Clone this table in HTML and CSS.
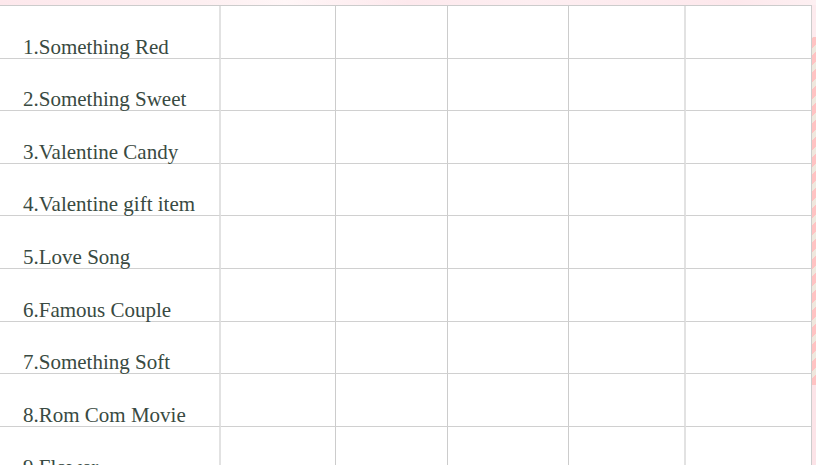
FILE: index.html
```html
<!DOCTYPE html>
<html>
<head>
<meta charset="utf-8">
<link rel="stylesheet" href="styles.css">
</head>
<body>
<div class="page">
  <div class="topstrip"></div>
  <div class="main">
    <div class="sheet">
      <div class="cell label"><span>1.Something Red</span></div><div class="cell"></div><div class="cell"></div><div class="cell"></div><div class="cell c4"></div><div class="cell"></div>
      <div class="cell label"><span>2.Something Sweet</span></div><div class="cell"></div><div class="cell"></div><div class="cell"></div><div class="cell c4"></div><div class="cell"></div>
      <div class="cell label"><span>3.Valentine Candy</span></div><div class="cell"></div><div class="cell"></div><div class="cell"></div><div class="cell c4"></div><div class="cell"></div>
      <div class="cell label"><span>4.Valentine gift item</span></div><div class="cell"></div><div class="cell"></div><div class="cell"></div><div class="cell c4"></div><div class="cell"></div>
      <div class="cell label"><span>5.Love Song</span></div><div class="cell"></div><div class="cell"></div><div class="cell"></div><div class="cell c4"></div><div class="cell"></div>
      <div class="cell label"><span>6.Famous Couple</span></div><div class="cell"></div><div class="cell"></div><div class="cell"></div><div class="cell c4"></div><div class="cell"></div>
      <div class="cell label"><span>7.Something Soft</span></div><div class="cell"></div><div class="cell"></div><div class="cell"></div><div class="cell c4"></div><div class="cell"></div>
      <div class="cell label"><span>8.Rom Com Movie</span></div><div class="cell"></div><div class="cell"></div><div class="cell"></div><div class="cell c4"></div><div class="cell"></div>
      <div class="cell label"><span>9.Flower</span></div><div class="cell"></div><div class="cell"></div><div class="cell"></div><div class="cell c4"></div><div class="cell"></div>
    </div>
    <div class="stripe"></div>
  </div>
</div>
</body>
</html>
```
FILE: styles.css
```css
html, body {
  margin: 0;
  padding: 0;
  background: #ffffff;
}
.page {
  width: 816px;
  height: 465px;
  overflow: hidden;
  display: flex;
  flex-direction: column;
}
.topstrip {
  height: 5px;
  flex: none;
  background: linear-gradient(90deg, #fde8ec 0%, #fdeff1 25%, #fff6f7 35%, #fde9ed 50%, #fdeef1 65%, #fde8ec 90%, #fdf0f2 100%);
}
.main {
  display: flex;
  flex: 1;
}
.sheet {
  display: grid;
  grid-template-columns: 221px 115px 112px 121px 117px 126px;
  grid-auto-rows: 52.6px;
  border-top: 1px solid #cccccc;
  width: 812px;
  flex: none;
}
.cell {
  box-sizing: border-box;
  border-bottom: 1px solid #d0d0d0;
  border-right: 1px solid #cccccc;
}
.cell.label {
  border-right: 2px solid #e2e2e2;
  display: flex;
  align-items: flex-end;
  padding: 0 0 5px 23px;
}
.cell.c4 {
  border-right: 2px solid #e2e2e2;
}
.cell.label span {
  font-family: "Liberation Serif", "DejaVu Serif", serif;
  font-size: 21px;
  line-height: 12px;
  color: #394a42;
  white-space: nowrap;
}
.stripe {
  width: 4px;
  flex: none;
  background:
    linear-gradient(180deg, #fdebee 0px, #fdebee 32px, transparent 32px, transparent 380px, #fce4e8 380px),
    repeating-linear-gradient(135deg, #ffc3c3 0px, #ffc3c3 7px, #efe7dd 7px, #efe7dd 12px);
}
```
